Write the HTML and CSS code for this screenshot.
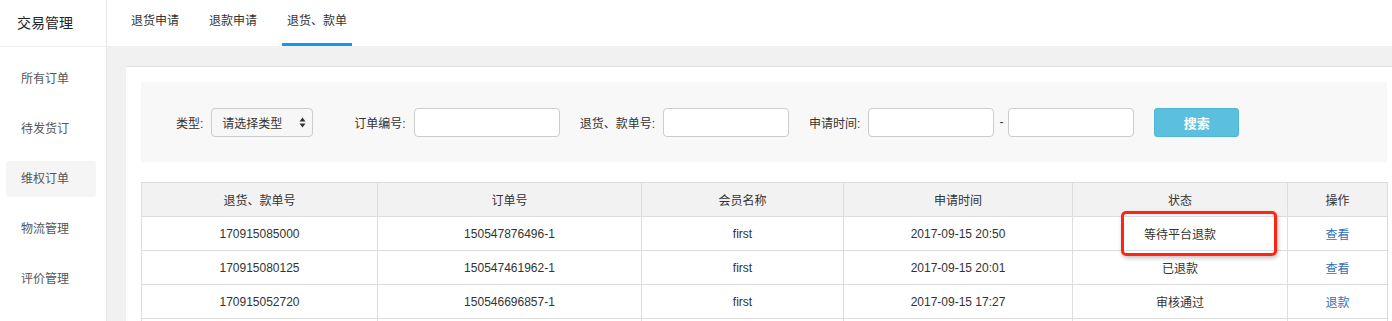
FILE: index.html
```html
<!DOCTYPE html>
<html lang="zh-CN">
<head>
  <meta charset="UTF-8" />
  <title>交易管理</title>
  <link rel="stylesheet" href="styles.css">
</head>
<body>
  <div class="layout">
    <aside class="sidebar">
      <div class="sidebar-title">交易管理</div>
      <ul class="side-menu">
        <li>所有订单</li>
        <li>待发货订</li>
        <li class="active">维权订单</li>
        <li>物流管理</li>
        <li>评价管理</li>
      </ul>
    </aside>

    <div class="main">
      <nav class="tabs">
        <a class="tab">退货申请</a>
        <a class="tab">退款申请</a>
        <a class="tab active">退货、款单</a>
      </nav>

      <div class="content">
        <div class="card">
          <form class="filter">
            <label class="label">类型:</label>
            <div class="select">
              <span>请选择类型</span>
              <svg class="arrows" width="7" height="11" viewBox="0 0 7 11">
                <path d="M3.5 0.5 L6.5 4.5 L0.5 4.5 Z" fill="#333"/>
                <path d="M3.5 10.5 L6.5 6.5 L0.5 6.5 Z" fill="#333"/>
              </svg>
            </div>

            <label class="label gap-l">订单编号:</label>
            <input class="input wide" type="text" />

            <label class="label gap-m">退货、款单号:</label>
            <input class="input" type="text" />

            <label class="label gap-m">申请时间:</label>
            <input class="input" type="text" />
            <span class="dash">-</span>
            <input class="input" type="text" />

            <button type="button" class="btn-search">搜索</button>
          </form>

          <div class="table-wrap">
            <table class="grid">
              <thead>
                <tr>
                  <th class="c1">退货、款单号</th>
                  <th class="c2">订单号</th>
                  <th class="c3">会员名称</th>
                  <th class="c4">申请时间</th>
                  <th class="c5">状态</th>
                  <th class="c6">操作</th>
                </tr>
              </thead>
              <tbody>
                <tr>
                  <td>170915085000</td>
                  <td>150547876496-1</td>
                  <td>first</td>
                  <td>2017-09-15 20:50</td>
                  <td>等待平台退款</td>
                  <td><a class="link">查看</a></td>
                </tr>
                <tr>
                  <td>170915080125</td>
                  <td>150547461962-1</td>
                  <td>first</td>
                  <td>2017-09-15 20:01</td>
                  <td>已退款</td>
                  <td><a class="link">查看</a></td>
                </tr>
                <tr>
                  <td>170915052720</td>
                  <td>150546696857-1</td>
                  <td>first</td>
                  <td>2017-09-15 17:27</td>
                  <td>审核通过</td>
                  <td><a class="link">退款</a></td>
                </tr>
                <tr>
                  <td>&nbsp;</td>
                  <td></td>
                  <td></td>
                  <td></td>
                  <td></td>
                  <td></td>
                </tr>
              </tbody>
            </table>
            <!-- annotation box around the status -->
            <div class="mark"></div>
          </div>
        </div>
      </div>
    </div>
  </div>
</body>
</html>
```

FILE: styles.css
```css
* {
  box-sizing: border-box;
}

body {
  margin: 0;
  font-family: "Liberation Sans", "Noto Sans CJK SC", sans-serif;
  font-size: 12px;
  color: #333;
  background: #fff;
  overflow: hidden;
}

.layout {
  display: flex;
  height: 321px;
}

/* sidebar */
.sidebar {
  width: 107px;
  flex: none;
  border-right: 1px solid #e6e6e6;
  background: #fff;
}

.sidebar-title {
  height: 47px;
  line-height: 46px;
  padding-left: 17px;
  font-size: 14px;
  color: #222;
  border-bottom: 1px solid #eee;
}

.side-menu {
  list-style: none;
  margin: 0;
  padding: 14px 0 0 6px;
}

.side-menu li {
  width: 90px;
  height: 36px;
  line-height: 36px;
  padding-left: 15px;
  margin-bottom: 14px;
  color: #555;
  border-radius: 3px;
}

.side-menu li.active {
  background: #f5f5f5;
}

/* main */
.main {
  flex: 1;
  display: flex;
  flex-direction: column;
  min-width: 0;
}

.tabs {
  display: flex;
  height: 46px;
  padding-left: 19px;
  background: #fff;
}

.tab {
  height: 46px;
  line-height: 42px;
  padding: 0 5px;
  margin-right: 20px;
  color: #333;
  border-bottom: 3px solid transparent;
}

.tab.active {
  border-bottom-color: #0e9aef;
}

.content {
  flex: 1;
  background: #f1f1f1;
  padding: 20px 0 0 19px;
}

.card {
  height: 100%;
  background: #fff;
  border-top: 1px solid #e2e2e2;
  padding: 15px 5px 0 15px;
}

/* filter bar */
.filter {
  display: flex;
  align-items: center;
  height: 80px;
  padding-left: 35px;
  background: #f8f8f8;
}

.label {
  color: #333;
  margin-right: 8px;
  white-space: nowrap;
}

.gap-l {
  margin-left: 41px;
}

.gap-m {
  margin-left: 20px;
}

.select {
  display: flex;
  align-items: center;
  justify-content: space-between;
  width: 102px;
  height: 29px;
  padding: 0 6px 0 10px;
  border: 1px solid #ccc;
  border-radius: 4px;
  background: #f7f7f7;
}

.input {
  width: 126px;
  height: 29px;
  border: 1px solid #ccc;
  border-radius: 4px;
  background: #fff;
  font: inherit;
  padding: 0 6px;
}

.input.wide {
  width: 146px;
}

.dash {
  margin: 0 5px;
}

.btn-search {
  margin-left: 20px;
  width: 85px;
  height: 29px;
  border: 1px solid #52b6d6;
  border-radius: 3px;
  background: #5bc0de;
  color: #fff;
  font: inherit;
  font-size: 13px;
  font-weight: bold;
}

/* table */
.table-wrap {
  position: relative;
  margin-top: 20px;
}

.grid {
  width: 1246px;
  border-collapse: collapse;
  table-layout: fixed;
}

.grid th,
.grid td {
  height: 34px;
  border: 1px solid #ddd;
  text-align: center;
  font-weight: normal;
  padding: 0;
}

.grid th {
  background: #f2f2f2;
}

.c1 { width: 236px; }
.c2 { width: 264px; }
.c3 { width: 202px; }
.c4 { width: 229px; }
.c5 { width: 215px; }
.c6 { width: 100px; }

.link {
  color: #2d72b8;
}

.mark {
  position: absolute;
  left: 980px;
  top: 29px;
  width: 156px;
  height: 45px;
  border: 3px solid #ff2414;
  border-radius: 5px;
  box-shadow: 1px 2px 4px rgba(0, 0, 0, 0.25);
}
```
